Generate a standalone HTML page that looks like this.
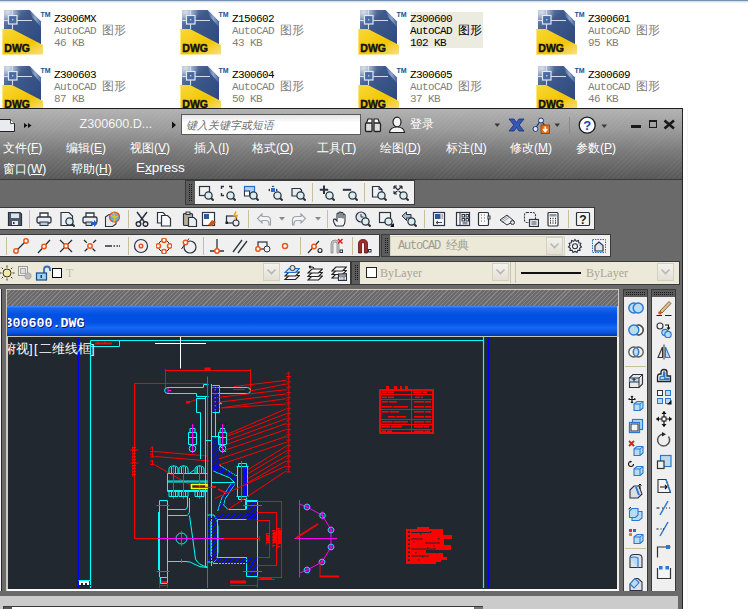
<!DOCTYPE html>
<html><head><meta charset="utf-8">
<style>
*{margin:0;padding:0;box-sizing:border-box}
html,body{width:748px;height:609px;overflow:hidden;background:#fff;font-family:"Liberation Sans",sans-serif}
.a{position:absolute}
.it{position:absolute;width:178px;height:56px}
.it svg{position:absolute;left:0;top:0}
.tx{position:absolute;left:52px;top:3.5px;font-family:"Liberation Mono",monospace;font-size:11px;line-height:12px;letter-spacing:-0.6px;color:#808080;white-space:pre}
.tx b{font-weight:normal;color:#000}
#win{position:absolute;left:0;top:108px;width:683px;height:501px;background:#6a6a6a;overflow:hidden}
#title{position:absolute;left:0;top:0;width:683px;height:72px;border-top:1px solid #1e1e1e;
 background:linear-gradient(#b2b2b2,#9a9a9a 30%,#7a7a7a 60%,#565656);}
#title:after{content:"";position:absolute;left:0;top:0;right:0;bottom:0;
 background:repeating-linear-gradient(135deg,rgba(255,255,255,0) 0 2.6px,rgba(255,255,255,.04) 2.6px 3.6px)}
.mn{position:absolute;color:#fff;font-size:13px;line-height:14px;white-space:pre;z-index:2}
.tb{position:absolute;background:#f0f0f0;border:1px solid #3c3c3c}
.sep{position:absolute;width:1px;background:#c9bd98}
.grip{position:absolute;background:#555;}
</style></head><body>
<svg width="0" height="0" style="position:absolute">
<defs>
<linearGradient id="gb" x1="0" y1="0" x2="1" y2="1"><stop offset="0" stop-color="#7890b8"/><stop offset=".35" stop-color="#3e5a8c"/><stop offset="1" stop-color="#2a467c"/></linearGradient>
<linearGradient id="gy" x1="0" y1="0" x2="1" y2="1"><stop offset="0" stop-color="#f7d93a"/><stop offset=".6" stop-color="#f2c500"/><stop offset="1" stop-color="#f7e08a"/></linearGradient>
<radialGradient id="gh" cx="0.15" cy="0.1" r="0.5"><stop offset="0" stop-color="#fff" stop-opacity=".75"/><stop offset="1" stop-color="#fff" stop-opacity="0"/></radialGradient>
<linearGradient id="gf" x1="0" y1="0" x2="1" y2="0"><stop offset="0" stop-color="#3a5890"/><stop offset=".5" stop-color="#a8bcdc"/><stop offset="1" stop-color="#4a6aa0"/></linearGradient>
<symbol id="dwg" viewBox="0 0 52 48">
<path d="M2 1H27.5L39 12.5V40H2Z" fill="url(#gb)"/>
<path d="M27.5 1L39 12.5V18L30 8Z" fill="url(#gf)" opacity=".8"/>
<rect x="2" y="1" width="26" height="22" fill="url(#gh)"/>
<path d="M2 11.5H30M10.5 1V20" stroke="#d0dcee" stroke-width="1.1" fill="none"/>
<rect x="6.5" y="6.5" width="8.5" height="8.5" fill="#4a6aa2" stroke="#e0e8f4" stroke-width="1.2"/>
<rect x="10" y="10" width="1.4" height="1.4" fill="#c0cce0"/>
<path d="M0 20H10L41 36V45.5H0Z" fill="url(#gy)"/>
<path d="M0.5 20.5V45" stroke="#fff2a0" stroke-width="1" opacity=".7"/>
<text x="2.3" y="43" font-family="Liberation Sans" font-weight="bold" font-size="10.5" fill="#111" stroke="#111" stroke-width=".45">DWG</text>
<text x="38.5" y="7.5" font-family="Liberation Sans" font-weight="bold" font-size="7" fill="#1e4e90">TM</text>
</symbol>
</defs></svg>

<!-- explorer -->
<div class="a" style="left:0;top:0;width:748px;height:1px;background:#7393b5"></div>
<div class="a" style="left:0;top:1px;width:748px;height:2px;background:linear-gradient(#c6d4e2,#fff)"></div>

<div class="it" style="left:2px;top:9px"><svg width="52" height="48"><use href="#dwg"/></svg><div class="tx"><b>Z3006MX</b>
AutoCAD <span style="font-size:12px;letter-spacing:0">图形</span>
46 KB</div></div>
<div class="it" style="left:180px;top:9px"><svg width="52" height="48"><use href="#dwg"/></svg><div class="tx"><b>Z150602</b>
AutoCAD <span style="font-size:12px;letter-spacing:0">图形</span>
43 KB</div></div>
<div class="it" style="left:358px;top:9px"><svg width="52" height="48"><use href="#dwg"/></svg><div class="a" style="left:52.7px;top:3px;width:72px;height:35.7px;background:#ecebdf"></div><div class="tx" style="color:#000"><b>Z300600</b>
AutoCAD <span style="font-size:12px;letter-spacing:0">图形</span>
102 KB</div></div>
<div class="it" style="left:536px;top:9px"><svg width="52" height="48"><use href="#dwg"/></svg><div class="tx"><b>Z300601</b>
AutoCAD <span style="font-size:12px;letter-spacing:0">图形</span>
95 KB</div></div>

<div class="it" style="left:2px;top:65px"><svg width="52" height="48"><use href="#dwg"/></svg><div class="tx"><b>Z300603</b>
AutoCAD <span style="font-size:12px;letter-spacing:0">图形</span>
87 KB</div></div>
<div class="it" style="left:180px;top:65px"><svg width="52" height="48"><use href="#dwg"/></svg><div class="tx"><b>Z300604</b>
AutoCAD <span style="font-size:12px;letter-spacing:0">图形</span>
50 KB</div></div>
<div class="it" style="left:358px;top:65px"><svg width="52" height="48"><use href="#dwg"/></svg><div class="tx"><b>Z300605</b>
AutoCAD <span style="font-size:12px;letter-spacing:0">图形</span>
37 KB</div></div>
<div class="it" style="left:536px;top:65px"><svg width="52" height="48"><use href="#dwg"/></svg><div class="tx"><b>Z300609</b>
AutoCAD <span style="font-size:12px;letter-spacing:0">图形</span>
46 KB</div></div>

<!-- AutoCAD window -->
<div class="a" style="left:0;top:108px;width:683px;height:501px;background:#6a6a6a"></div>
<div id="title" style="top:108px"></div>
<div class="a" style="left:0;top:179px;width:683px;height:1px;background:#3a3a3a"></div>
<!-- title bar items -->
<svg class="a" style="left:0;top:118px" width="40" height="16">
 <path d="M-4 1.5H10.5L14.5 5.5V13.5H-4Z" fill="#e8ebf0" stroke="#222" stroke-width="1"/>
 <path d="M10.5 1.5V5.5H14.5" fill="#fff" stroke="#222" stroke-width=".8"/>
 <path d="M24 5L27.5 7.5L24 10ZM28 5L31.5 7.5L28 10Z" fill="#111"/>
</svg>
<div class="mn" style="left:79.5px;top:116.5px;font-size:12.6px;line-height:14px;color:#f4f4f4">Z300600.D...</div>
<svg class="a" style="left:171px;top:121px" width="6" height="8"><path d="M1 0.5L5 4L1 7.5Z" fill="#111"/></svg>
<div class="a" style="left:181px;top:114px;width:180px;height:21px;border:1px solid #5a5a5a;background:linear-gradient(#e6e6e6,#fff 40%);"></div>
<div class="mn" style="left:186px;top:118px;color:#6e6e6e;font-style:italic;font-size:10.8px">键入关键字或短语</div>
<svg class="a" style="left:364px;top:117px" width="20" height="16">
 <path d="M2.5 6L4 2H8V6M10 6V2H14L15.5 6" fill="#fff" stroke="#222" stroke-width="1.2"/>
 <rect x="1.5" y="6" width="6.5" height="8.5" rx="1" fill="#ddd" stroke="#222" stroke-width="1.3"/>
 <rect x="10" y="6" width="6.5" height="8.5" rx="1" fill="#ddd" stroke="#222" stroke-width="1.3"/>
</svg>
<svg class="a" style="left:388px;top:116px" width="18" height="18">
 <ellipse cx="9" cy="6" rx="4" ry="4.8" fill="#f4f4f4" stroke="#222" stroke-width="1.2"/>
 <path d="M1.5 16.5C2 12 5 11 9 11S16 12 16.5 16.5Z" fill="#f4f4f4" stroke="#222" stroke-width="1.2"/>
</svg>
<div class="mn" style="left:410px;top:117px;font-size:12px">登录</div>
<svg class="a" style="left:494px;top:122px" width="8" height="6"><path d="M0.5 1.5H6L3.2 5Z" fill="#3a3a3a"/></svg>
<svg class="a" style="left:508px;top:118px" width="18" height="14">
 <path d="M1 1H6L8.5 4.5L11 1H16L11.2 7L16 13H11L8.5 9.5L6 13H1L5.8 7Z" fill="#3557b8" stroke="#1a2f78" stroke-width=".8"/>
</svg>
<svg class="a" style="left:532px;top:117px" width="20" height="18">
 <path d="M3 12L9 3L13 9" fill="none" stroke="#1e3a7a" stroke-width="1.3"/>
 <circle cx="9" cy="3.5" r="2.5" fill="#dfe8f8" stroke="#1e3a7a"/><circle cx="3.5" cy="12" r="2.5" fill="#dfe8f8" stroke="#1e3a7a"/>
 <rect x="9" y="8" width="8.5" height="8.5" fill="#e8701a" stroke="#8a3a00" stroke-width=".8"/>
 <path d="M13.2 9.5V14M11 12L13.2 14.5L15.4 12" stroke="#fff" stroke-width="1.5" fill="none"/>
</svg>
<svg class="a" style="left:554px;top:122px" width="8" height="6"><path d="M0.5 1.5H6L3.2 5Z" fill="#3a3a3a"/></svg>
<div class="a" style="left:569px;top:117px;width:1px;height:17px;background:#8a8a8a"></div>
<svg class="a" style="left:578px;top:116px" width="19" height="19">
 <circle cx="9.2" cy="9.2" r="8" fill="#fafafa" stroke="#1a1a1a" stroke-width="1.3"/>
 <text x="9.2" y="14.2" text-anchor="middle" font-family="Liberation Sans" font-weight="bold" font-size="13" fill="#1d3fb8">?</text>
</svg>
<svg class="a" style="left:601px;top:123px" width="8" height="6"><path d="M0.5 1.5H6L3.2 5Z" fill="#3a3a3a"/></svg>
<div class="a" style="left:631px;top:125px;width:10px;height:2.5px;background:#1a1a1a"></div>
<div class="a" style="left:649px;top:120px;width:8px;height:8px;border:1.5px solid #1a1a1a;border-top-width:2px"></div>
<svg class="a" style="left:663px;top:119px" width="13" height="11"><path d="M1.5 1.5L11 9.5M11 1.5L1.5 9.5" stroke="#1a1a1a" stroke-width="2.6"/></svg>

<!-- menus -->
<div class="mn" style="left:3px;top:141px;font-size:12px">文件(<u>F</u>)</div>
<div class="mn" style="left:66px;top:141px;font-size:12px">编辑(<u>E</u>)</div>
<div class="mn" style="left:130px;top:141px;font-size:12px">视图(<u>V</u>)</div>
<div class="mn" style="left:194px;top:141px;font-size:12px">插入(<u>I</u>)</div>
<div class="mn" style="left:252px;top:141px;font-size:12px">格式(<u>O</u>)</div>
<div class="mn" style="left:317px;top:141px;font-size:12px">工具(<u>T</u>)</div>
<div class="mn" style="left:380px;top:141px;font-size:12px">绘图(<u>D</u>)</div>
<div class="mn" style="left:446px;top:141px;font-size:12px">标注(<u>N</u>)</div>
<div class="mn" style="left:510px;top:141px;font-size:12px">修改(<u>M</u>)</div>
<div class="mn" style="left:576px;top:141px;font-size:12px">参数(<u>P</u>)</div>
<div class="mn" style="left:3px;top:161.5px;font-size:12px">窗口(<u>W</u>)</div>
<div class="mn" style="left:71px;top:161.5px;font-size:12px">帮助(<u>H</u>)</div>
<div class="mn" style="left:136px;top:161px;font-size:13.5px">E<u>x</u>press</div>

<div class="a" style="left:185px;top:180px;width:230px;height:25px;background:#f0f0f0;border:1px solid #3a3a3a"></div>
<svg class="a" style="left:186px;top:181px" width="9" height="23"><rect width="9" height="23" fill="#5c5c5c"/><rect x="3" y="3" width="1" height="1" fill="#1a1a1a"/><rect x="3" y="5" width="1" height="1" fill="#1a1a1a"/><rect x="3" y="7" width="1" height="1" fill="#1a1a1a"/><rect x="3" y="9" width="1" height="1" fill="#1a1a1a"/><rect x="3" y="11" width="1" height="1" fill="#1a1a1a"/><rect x="3" y="13" width="1" height="1" fill="#1a1a1a"/><rect x="3" y="15" width="1" height="1" fill="#1a1a1a"/><rect x="3" y="17" width="1" height="1" fill="#1a1a1a"/><rect x="3" y="19" width="1" height="1" fill="#1a1a1a"/><rect x="5" y="3" width="1" height="1" fill="#1a1a1a"/><rect x="5" y="5" width="1" height="1" fill="#1a1a1a"/><rect x="5" y="7" width="1" height="1" fill="#1a1a1a"/><rect x="5" y="9" width="1" height="1" fill="#1a1a1a"/><rect x="5" y="11" width="1" height="1" fill="#1a1a1a"/><rect x="5" y="13" width="1" height="1" fill="#1a1a1a"/><rect x="5" y="15" width="1" height="1" fill="#1a1a1a"/><rect x="5" y="17" width="1" height="1" fill="#1a1a1a"/><rect x="5" y="19" width="1" height="1" fill="#1a1a1a"/></svg>
<svg class="a" style="left:197.7px;top:184.5px" width="16" height="16"><rect x="1.5" y="1.5" width="10" height="9" fill="none" stroke="#2b3340" stroke-width="1.2"/><circle cx="10.5" cy="10.5" r="3.6" fill="#d9eeee" stroke="#2b3340" stroke-width="1.3"/><path d="M13.2 13.2L15.6 15.6" stroke="#2b3340" stroke-width="2"/></svg>
<svg class="a" style="left:220.0px;top:184.5px" width="16" height="16"><path d="M1.5 4V1.5H4M9 1.5H11.5V4M1.5 8V10.5H4" fill="none" stroke="#2b3340" stroke-width="1.4"/><circle cx="10.5" cy="10.5" r="3.6" fill="#d9eeee" stroke="#2b3340" stroke-width="1.3"/><path d="M13.2 13.2L15.6 15.6" stroke="#2b3340" stroke-width="2"/></svg>
<svg class="a" style="left:243.4px;top:184.5px" width="16" height="16"><rect x="1.5" y="1.5" width="10" height="9" fill="#a9d4f2" stroke="#2a6ec8" stroke-width="1.2"/><rect x="1.5" y="6" width="5" height="5" fill="#fff" stroke="#2b3340"/><circle cx="10.5" cy="10.5" r="3.6" fill="#d9eeee" stroke="#2b3340" stroke-width="1.3"/><path d="M13.2 13.2L15.6 15.6" stroke="#2b3340" stroke-width="2"/></svg>
<svg class="a" style="left:266.7px;top:184.5px" width="16" height="16"><rect x="4" y="3" width="4" height="4" fill="#2a6ec8"/><path d="M1 5L3 3.5V6.5ZM11 5L9 3.5V6.5ZM6 0.5L4.5 2H7.5Z" fill="#2b3340"/><circle cx="10.5" cy="10.5" r="3.6" fill="#d9eeee" stroke="#2b3340" stroke-width="1.3"/><path d="M13.2 13.2L15.6 15.6" stroke="#2b3340" stroke-width="2"/></svg>
<svg class="a" style="left:290.0px;top:184.5px" width="16" height="16"><path d="M2 3.5H10L11.5 5V11H2Z" fill="#e8ecf2" stroke="#2b3340" stroke-width="1.2"/><circle cx="10.5" cy="10.5" r="3.6" fill="#d9eeee" stroke="#2b3340" stroke-width="1.3"/><path d="M13.2 13.2L15.6 15.6" stroke="#2b3340" stroke-width="2"/></svg>
<svg class="a" style="left:318.5px;top:184.5px" width="16" height="16"><path d="M5 0.5V9M0.8 4.8H9.2" stroke="#2b3340" stroke-width="2"/><circle cx="10.5" cy="10.5" r="3.6" fill="#d9eeee" stroke="#2b3340" stroke-width="1.3"/><path d="M13.2 13.2L15.6 15.6" stroke="#2b3340" stroke-width="2"/></svg>
<svg class="a" style="left:341.8px;top:184.5px" width="16" height="16"><path d="M0.8 4.8H9.2" stroke="#2b3340" stroke-width="2"/><circle cx="10.5" cy="10.5" r="3.6" fill="#d9eeee" stroke="#2b3340" stroke-width="1.3"/><path d="M13.2 13.2L15.6 15.6" stroke="#2b3340" stroke-width="2"/></svg>
<svg class="a" style="left:370.7px;top:184.5px" width="16" height="16"><path d="M1.5 1.5H8L11 4.5V12H1.5Z" fill="#eef1f5" stroke="#2b3340" stroke-width="1.2"/><path d="M8 1.5V4.5H11" fill="none" stroke="#2b3340"/><circle cx="10.5" cy="10.5" r="3.6" fill="#d9eeee" stroke="#2b3340" stroke-width="1.3"/><path d="M13.2 13.2L15.6 15.6" stroke="#2b3340" stroke-width="2"/></svg>
<svg class="a" style="left:393.0px;top:184.5px" width="16" height="16"><path d="M1 1L9 9M1 9L9 1M1 1H4M1 1V4M9 1H6M9 1V4M1 9V6M1 9H4" fill="none" stroke="#2b3340" stroke-width="1.2"/><circle cx="10.5" cy="10.5" r="3.6" fill="#d9eeee" stroke="#2b3340" stroke-width="1.3"/><path d="M13.2 13.2L15.6 15.6" stroke="#2b3340" stroke-width="2"/></svg>
<div class="a" style="left:312px;top:183px;width:1px;height:19px;background:#cbbf9a"></div>
<div class="a" style="left:364px;top:183px;width:1px;height:19px;background:#cbbf9a"></div>
<div class="a" style="left:-1px;top:207px;width:596px;height:23px;background:#f0f0f0;border:1px solid #3a3a3a"></div>
<svg class="a" style="left:7.0px;top:210.5px" width="16" height="16"><path d="M1.5 1.5H13L14.5 3V14.5H1.5Z" fill="#4e5a6a" stroke="#2a3240" stroke-width="1.2"/><rect x="4" y="2.5" width="8" height="4.5" fill="#dde3ea"/><rect x="5" y="10" width="6" height="4" fill="#e8ecf0"/><rect x="6" y="11" width="1.5" height="2" fill="#333"/></svg>
<svg class="a" style="left:36.0px;top:210.5px" width="16" height="16"><path d="M4 6V2H12V6" fill="#fff" stroke="#2b3340" stroke-width="1.3"/><rect x="1" y="6" width="14" height="6" rx="1.5" fill="#e9ecf0" stroke="#2b3340" stroke-width="1.3"/><rect x="4" y="11" width="8" height="3.5" fill="#bcd" stroke="#2b3340"/></svg>
<svg class="a" style="left:59.0px;top:210.5px" width="16" height="16"><path d="M2 1.5H10L13.5 5V14.5H2Z" fill="#eef1f5" stroke="#2b3340" stroke-width="1.2"/><circle cx="10.5" cy="10.5" r="3.6" fill="#d9eeee" stroke="#2b3340" stroke-width="1.3"/><path d="M13.2 13.2L15.6 15.6" stroke="#2b3340" stroke-width="2"/></svg>
<svg class="a" style="left:81.5px;top:210.5px" width="16" height="16"><path d="M4 6V2H12V6" fill="#fff" stroke="#2b3340" stroke-width="1.3"/><rect x="1" y="6" width="14" height="6" rx="1.5" fill="#e9ecf0" stroke="#2b3340" stroke-width="1.3"/><rect x="4" y="11" width="6" height="3.5" fill="#bcd" stroke="#2b3340"/><path d="M9 11H12V9L15.5 12.5L12 16V14H9Z" fill="#1a64c8"/></svg>
<svg class="a" style="left:104.0px;top:210.5px" width="16" height="16"><path d="M1.5 6L5 3.5H12V13L8.5 15.5H1.5Z" fill="#e6e9ee" stroke="#2b3340" stroke-width="1.1"/><circle cx="10.5" cy="6" r="5" fill="#59b5e6" stroke="#e84a20" stroke-width="1.2"/><path d="M7 4Q10 8 14 5M9 1.5Q12 6 10 11" stroke="#f0c020" stroke-width="1.2" fill="none"/></svg>
<svg class="a" style="left:133.7px;top:210.5px" width="16" height="16"><path d="M3 1L10.5 11M13 1L5.5 11" stroke="#2b3340" stroke-width="1.5"/><circle cx="4.5" cy="13" r="2.3" fill="none" stroke="#2b3340" stroke-width="1.5"/><circle cx="11.5" cy="13" r="2.3" fill="none" stroke="#2b3340" stroke-width="1.5"/></svg>
<svg class="a" style="left:156.4px;top:210.5px" width="16" height="16"><path d="M1.5 1.5H7L9 3.5V12H1.5Z" fill="#fafafa" stroke="#2b3340" stroke-width="1.2"/><path d="M5.5 4.5H11.5L14.5 7.5V15H5.5Z" fill="#fafafa" stroke="#2b3340" stroke-width="1.2"/></svg>
<svg class="a" style="left:182.0px;top:210.5px" width="16" height="16"><rect x="1.5" y="2.5" width="9" height="12" rx="1" fill="#b8ad98" stroke="#2b3340" stroke-width="1.2"/><rect x="4" y="1" width="4" height="2.5" fill="#ddd" stroke="#2b3340"/><path d="M6.5 6.5H12L14.5 9V15.5H6.5Z" fill="#e9eef4" stroke="#2b3340" stroke-width="1.2"/></svg>
<svg class="a" style="left:201.4px;top:210.5px" width="16" height="16"><rect x="1.5" y="1.5" width="12" height="13" fill="#fff" stroke="#2b3340" stroke-width="1.2"/><rect x="3" y="3" width="5" height="5" fill="#2a5a9a"/><path d="M7 14L11 9L15 11L11 15Z" fill="#c85a10"/></svg>
<svg class="a" style="left:225.4px;top:210.5px" width="16" height="16"><rect x="1.5" y="5" width="10" height="7" fill="#e9edf1" stroke="#2b3340" stroke-width="1.2"/><circle cx="11" cy="12" r="3" fill="#eee" stroke="#2b3340" stroke-width="1.1"/><rect x="0.5" y="10.5" width="2.5" height="2.5" fill="#222"/><path d="M11 0.5L9 4.5H12L10 8.5" stroke="#f0a010" stroke-width="1.5" fill="none"/></svg>
<svg class="a" style="left:256.0px;top:210.5px" width="16" height="16"><path d="M6 3L1.5 7.5L6 12V9.5H10Q13 9.5 13 12.5V14H14.5V9Q14.5 5.5 10.5 5.5H6Z" fill="#f4f4f4" stroke="#9aa2ac" stroke-width="1.1"/></svg>
<svg class="a" style="left:291.0px;top:210.5px" width="16" height="16"><path d="M10 3L14.5 7.5L10 12V9.5H6Q3 9.5 3 12.5V14H1.5V9Q1.5 5.5 5.5 5.5H10Z" fill="#f4f4f4" stroke="#9aa2ac" stroke-width="1.1"/></svg>
<svg class="a" style="left:332.4px;top:210.5px" width="16" height="16"><path d="M4 15Q1 11 1.5 8.5L3 8L5 10V3Q5 2 6 2T7 3V7V1.8Q7 1 8 1T9 1.8V7V2.3Q9 1.5 10 1.5T11 2.3V7.5V4Q11 3 12 3T13 4V10Q13 13 11 15Z" fill="#f4f4f4" stroke="#2b3340" stroke-width="1.1"/></svg>
<svg class="a" style="left:355.0px;top:210.5px" width="16" height="16"><circle cx="6" cy="6" r="5" fill="#dce4ec" stroke="#2b3340" stroke-width="1.2"/><path d="M6 3V6H8.5" stroke="#2b3340" fill="none"/><circle cx="10.5" cy="10.5" r="3.6" fill="#d9eeee" stroke="#2b3340" stroke-width="1.3"/><path d="M13.2 13.2L15.6 15.6" stroke="#2b3340" stroke-width="2"/></svg>
<svg class="a" style="left:377.8px;top:210.5px" width="16" height="16"><rect x="1.5" y="1.5" width="11" height="10" fill="none" stroke="#2b3340" stroke-width="1.2"/><circle cx="10.5" cy="10.5" r="3.6" fill="#d9eeee" stroke="#2b3340" stroke-width="1.3"/><path d="M13.2 13.2L15.6 15.6" stroke="#2b3340" stroke-width="2"/><path d="M16 12V16H12Z" fill="#111"/></svg>
<svg class="a" style="left:401.4px;top:210.5px" width="16" height="16"><path d="M1 5L5.5 1V3.5H10V7H5.5V9.5Z" fill="#a9b8c8" stroke="#2b3340" stroke-width="1"/><circle cx="10.5" cy="10.5" r="3.6" fill="#d9eeee" stroke="#2b3340" stroke-width="1.3"/><path d="M13.2 13.2L15.6 15.6" stroke="#2b3340" stroke-width="2"/></svg>
<svg class="a" style="left:430.8px;top:210.5px" width="16" height="16"><rect x="2.5" y="1.5" width="11" height="13" fill="#fafafa" stroke="#2b3340" stroke-width="1.2"/><rect x="4" y="3" width="5.5" height="5" fill="#2a5a9a"/><rect x="10.5" y="3" width="1.5" height="5" fill="#aaa"/><path d="M5 11.5H11M5 11.5L7 10M5 11.5L7 13" stroke="#2b3340" stroke-width=".9" fill="none"/></svg>
<svg class="a" style="left:454.8px;top:210.5px" width="16" height="16"><rect x="1.5" y="1.5" width="13" height="13" fill="#fafafa" stroke="#2b3340" stroke-width="1.2"/><path d="M5 1.5V14.5" stroke="#2b3340"/><rect x="7" y="3.5" width="2.5" height="2.5" fill="none" stroke="#2b3340"/><rect x="11" y="3.5" width="2.5" height="2.5" fill="none" stroke="#2b3340"/><rect x="7" y="7.5" width="2.5" height="2.5" fill="none" stroke="#2b3340"/><rect x="11" y="7.5" width="2.5" height="2.5" fill="none" stroke="#2b3340"/><rect x="7.5" y="11" width="5" height="2.5" fill="#889"/></svg>
<svg class="a" style="left:476.0px;top:210.5px" width="16" height="16"><rect x="2.5" y="1.5" width="10" height="13" rx="1" fill="#fafafa" stroke="#2b3340" stroke-width="1.2"/><path d="M5 4H6M8 4H9M5 7H6M8 7H9M5 10H6M8 10H9" stroke="#999" stroke-width="1.5"/><rect x="12" y="5" width="2" height="3" fill="#fff" stroke="#2b3340"/></svg>
<svg class="a" style="left:499.0px;top:210.5px" width="16" height="16"><path d="M1 9L8 4L15 10L8 14Z" fill="#eceef0" stroke="#2b3340" stroke-width="1"/><path d="M2 10L9 5M3 11.5L10 6.5" stroke="#888" stroke-width=".8"/><circle cx="13.5" cy="11.5" r="2" fill="#ddd" stroke="#2b3340"/></svg>
<svg class="a" style="left:523.0px;top:210.5px" width="16" height="16"><rect x="1.5" y="1.5" width="11" height="10" rx="2.5" fill="none" stroke="#2b3340" stroke-width="1.1" stroke-dasharray="2 1"/><rect x="6.5" y="8.5" width="9" height="7" fill="#eef2f6" stroke="#2b3340" stroke-width="1.2"/><path d="M8.5 11H13.5M8.5 13H13.5" stroke="#2b3340" stroke-width=".9"/></svg>
<svg class="a" style="left:545.0px;top:210.5px" width="16" height="16"><rect x="3" y="1.5" width="10" height="13.5" rx="1" fill="#fafafa" stroke="#2b3340" stroke-width="1.2"/><rect x="4.5" y="3" width="7" height="2.5" fill="#8a96a6"/><path d="M5 7.5H6M7.5 7.5H8.5M10 7.5H11M5 9.8H6M7.5 9.8H8.5M10 9.8H11M5 12H6M7.5 12H8.5M10 12H11" stroke="#333" stroke-width="1.3"/></svg>
<svg class="a" style="left:575.0px;top:210.5px" width="16" height="16"><rect x="1.5" y="1.5" width="13" height="13" rx="1" fill="#f4f4f4" stroke="#2b3340" stroke-width="1.2"/><text x="8" y="13" text-anchor="middle" font-family="Liberation Sans" font-weight="bold" font-size="12" fill="#1a1a1a">?</text></svg>
<svg class="a" style="left:277.5px;top:214.5px" width="8" height="8"><path d="M1 2H7L4 5.5Z" fill="#8a8a8a"/></svg>
<svg class="a" style="left:313.6px;top:214.5px" width="8" height="8"><path d="M1 2H7L4 5.5Z" fill="#8a8a8a"/></svg>
<div class="a" style="left:29px;top:210px;width:1px;height:18px;background:#cbbf9a"></div>
<div class="a" style="left:128px;top:210px;width:1px;height:18px;background:#cbbf9a"></div>
<div class="a" style="left:248px;top:210px;width:1px;height:18px;background:#cbbf9a"></div>
<div class="a" style="left:327px;top:210px;width:1px;height:18px;background:#cbbf9a"></div>
<div class="a" style="left:424px;top:210px;width:1px;height:18px;background:#cbbf9a"></div>
<div class="a" style="left:568px;top:210px;width:1px;height:18px;background:#cbbf9a"></div>
<div class="a" style="left:-1px;top:234px;width:381px;height:23px;background:#f0f0f0;border:1px solid #3a3a3a"></div>
<svg class="a" style="left:12.9px;top:237.8px" width="16" height="16"><path d="M3 13L13 3" stroke="#2b3340" stroke-width="1.3"/><circle cx="3" cy="13" r="2.2" fill="#fff" stroke="#e8581a" stroke-width="1.5"/><circle cx="13" cy="3" r="2.2" fill="#fff" stroke="#e8581a" stroke-width="1.5"/></svg>
<svg class="a" style="left:36.0px;top:237.8px" width="16" height="16"><path d="M2 15L14 2" stroke="#2b3340" stroke-width="1.3"/><circle cx="8" cy="8.5" r="2.2" fill="#fff" stroke="#e8581a" stroke-width="1.5"/></svg>
<svg class="a" style="left:58.3px;top:237.8px" width="16" height="16"><path d="M2 2L14 14M14 2L2 14" stroke="#2b3340" stroke-width="1.3"/><circle cx="8" cy="8" r="2.2" fill="#fff" stroke="#e8581a" stroke-width="1.5"/></svg>
<svg class="a" style="left:81.6px;top:237.8px" width="16" height="16"><path d="M2 2L14 14M14 2L2 14" stroke="#2b3340" stroke-width="1.3" stroke-dasharray="4 2"/><circle cx="8" cy="8" r="2.2" fill="#fff" stroke="#e8581a" stroke-width="1.5"/></svg>
<svg class="a" style="left:104.0px;top:237.8px" width="16" height="16"><path d="M1 8H8M9.5 8H11M12.5 8H14M15 8H16" stroke="#2b3340" stroke-width="1.3"/></svg>
<svg class="a" style="left:133.0px;top:237.8px" width="16" height="16"><circle cx="8" cy="8" r="6.5" fill="#f0f0f0" stroke="#2b3340" stroke-width="1.2"/><circle cx="8" cy="8" r="1.8" fill="#fff" stroke="#e8581a" stroke-width="1.5"/></svg>
<svg class="a" style="left:156.4px;top:237.8px" width="16" height="16"><circle cx="8" cy="8" r="5.8" fill="none" stroke="#2b3340" stroke-width="1"/><circle cx="8" cy="2.3" r="2.2" fill="#fff" stroke="#e8581a" stroke-width="1.5"/><circle cx="8" cy="13.7" r="2.2" fill="#fff" stroke="#e8581a" stroke-width="1.5"/><circle cx="2.3" cy="8" r="2.2" fill="#fff" stroke="#e8581a" stroke-width="1.5"/><circle cx="13.7" cy="8" r="2.2" fill="#fff" stroke="#e8581a" stroke-width="1.5"/></svg>
<svg class="a" style="left:180.5px;top:237.8px" width="16" height="16"><circle cx="9" cy="9" r="6" fill="#f0f0f0" stroke="#2b3340" stroke-width="1.2"/><path d="M0.5 11L8 0.5" stroke="#2b3340"/><circle cx="4.5" cy="4.5" r="2.2" fill="#fff" stroke="#e8581a" stroke-width="1.5"/></svg>
<svg class="a" style="left:208.6px;top:237.8px" width="16" height="16"><path d="M8 1V13M1 13H15" stroke="#2b3340" stroke-width="1.3"/><circle cx="8" cy="13" r="2.2" fill="#fff" stroke="#e8581a" stroke-width="1.5"/></svg>
<svg class="a" style="left:232.0px;top:237.8px" width="16" height="16"><path d="M1 14L10 2M6 15L15 3" stroke="#2b3340" stroke-width="1.3"/></svg>
<svg class="a" style="left:254.8px;top:237.8px" width="16" height="16"><rect x="3" y="4" width="9" height="7" fill="none" stroke="#2b3340" stroke-width="1.2"/><circle cx="12" cy="11" r="3" fill="#f0f0f0" stroke="#2b3340"/><circle cx="3" cy="11" r="2.2" fill="#fff" stroke="#e8581a" stroke-width="1.5"/></svg>
<svg class="a" style="left:277.0px;top:237.8px" width="16" height="16"><circle cx="8" cy="8" r="2.5" fill="#fff" stroke="#e8581a" stroke-width="1.5"/></svg>
<svg class="a" style="left:307.0px;top:237.8px" width="16" height="16"><path d="M1 15L12 3" stroke="#2b3340" stroke-width="1.2"/><circle cx="7" cy="8.5" r="2.2" fill="#fff" stroke="#e8581a" stroke-width="1.5"/><circle cx="13" cy="12.5" r="2" fill="none" stroke="#2b3340" stroke-width="1.2"/></svg>
<svg class="a" style="left:328.4px;top:237.8px" width="16" height="16"><path d="M3 15V6Q3 2 7 2Q11 2 11 6V15H9V6Q9 4 7 4Q5 4 5 6V15Z" fill="#c8c8c8" stroke="#888" stroke-width=".8"/><path d="M10 1L14.5 5.5M14.5 1L10 5.5" stroke="#e02020" stroke-width="1.6"/><rect x="12" y="12" width="2.5" height="2.5" fill="none" stroke="#2b3340"/></svg>
<svg class="a" style="left:356.4px;top:237.8px" width="16" height="16"><path d="M2.5 15V6Q2.5 1.5 7 1.5Q11.5 1.5 11.5 6V15H8.5V6Q8.5 4.5 7 4.5Q5.5 4.5 5.5 6V15Z" fill="#a42a2a" stroke="#5a1010" stroke-width=".8"/><rect x="12.5" y="11.5" width="2.5" height="2.5" fill="none" stroke="#2b3340"/></svg>
<div class="a" style="left:6px;top:237px;width:1px;height:18px;background:#cbbf9a"></div>
<div class="a" style="left:128px;top:237px;width:1px;height:18px;background:#cbbf9a"></div>
<div class="a" style="left:203px;top:237px;width:1px;height:18px;background:#cbbf9a"></div>
<div class="a" style="left:300px;top:237px;width:1px;height:18px;background:#cbbf9a"></div>
<div class="a" style="left:352px;top:237px;width:1px;height:18px;background:#cbbf9a"></div>
<div class="a" style="left:381px;top:234px;width:230px;height:23px;background:#f0f0f0;border:1px solid #3a3a3a"></div>
<svg class="a" style="left:382px;top:235px" width="8" height="21"><rect width="8" height="21" fill="#5c5c5c"/><rect x="3" y="3" width="1" height="1" fill="#1a1a1a"/><rect x="3" y="5" width="1" height="1" fill="#1a1a1a"/><rect x="3" y="7" width="1" height="1" fill="#1a1a1a"/><rect x="3" y="9" width="1" height="1" fill="#1a1a1a"/><rect x="3" y="11" width="1" height="1" fill="#1a1a1a"/><rect x="3" y="13" width="1" height="1" fill="#1a1a1a"/><rect x="3" y="15" width="1" height="1" fill="#1a1a1a"/><rect x="3" y="17" width="1" height="1" fill="#1a1a1a"/><rect x="5" y="3" width="1" height="1" fill="#1a1a1a"/><rect x="5" y="5" width="1" height="1" fill="#1a1a1a"/><rect x="5" y="7" width="1" height="1" fill="#1a1a1a"/><rect x="5" y="9" width="1" height="1" fill="#1a1a1a"/><rect x="5" y="11" width="1" height="1" fill="#1a1a1a"/><rect x="5" y="13" width="1" height="1" fill="#1a1a1a"/><rect x="5" y="15" width="1" height="1" fill="#1a1a1a"/><rect x="5" y="17" width="1" height="1" fill="#1a1a1a"/></svg>
<div class="a" style="left:390px;top:236px;width:175px;height:20px;background:#ece9d8;border:1px solid #d8d4c0"></div>
<div class="mn" style="left:398px;top:239px;color:#a09d90;font-family:'Liberation Mono',monospace;font-size:12px;letter-spacing:-1.2px">AutoCAD 经典</div>
<div class="a" style="left:546px;top:237px;width:17px;height:18px;background:linear-gradient(#f2f2ee,#e2e0d6);border:1px solid #d4d0c0"></div><svg class="a" style="left:549px;top:242px" width="11" height="8"><path d="M1.5 1.5L5.5 5.5L9.5 1.5" stroke="#b8b6ae" stroke-width="1.6" fill="none"/></svg>
<svg class="a" style="left:566.7px;top:237.5px" width="16" height="16"><path d="M8 1.5L9.3 3.3L11.5 2.6L11.7 4.8L13.9 5.3L13 7.4L14.5 9L12.6 10.2L13 12.4L10.8 12.4L10 14.5L8 13.4L6 14.5L5.2 12.4L3 12.4L3.4 10.2L1.5 9L3 7.4L2.1 5.3L4.3 4.8L4.5 2.6L6.7 3.3Z" fill="#f4f4f4" stroke="#2b3340" stroke-width="1.1"/><circle cx="8" cy="8.3" r="2.5" fill="#f4f4f4" stroke="#2b3340" stroke-width="1.1"/></svg>
<svg class="a" style="left:591.0px;top:237.5px" width="16" height="16"><rect x="1.5" y="1.5" width="13" height="13" fill="none" stroke="#2a6ec8" stroke-width="1" stroke-dasharray="1.5 1"/><path d="M4 13V7.5L8 4L12 7.5V13Z" fill="#e2e6ea" stroke="#2b3340" stroke-width="1.2"/></svg>
<div class="a" style="left:-1px;top:261px;width:352px;height:24px;background:#f0f0f0;border:1px solid #3a3a3a"></div>
<div class="a" style="left:0;top:262px;width:280px;height:22px;background:#ece9d8"></div>
<svg class="a" style="left:-0.8px;top:264.5px" width="16" height="16"><circle cx="8" cy="8" r="4" fill="#f8e8a0" stroke="#333" stroke-width="1"/><path d="M8 0.5V2.5M8 13.5V15.5M0.5 8H2.5M13.5 8H15.5M2.7 2.7L4 4M12 12L13.3 13.3M2.7 13.3L4 12M12 4L13.3 2.7" stroke="#333" stroke-width="1"/></svg>
<svg class="a" style="left:16.6px;top:264.5px" width="16" height="16"><rect x="1.5" y="1.5" width="9" height="9" fill="#eee" stroke="#999"/><rect x="3.5" y="3.5" width="5" height="5" fill="#ddd" stroke="#aaa"/><circle cx="11" cy="11" r="3.2" fill="#bbb" stroke="#aaa"/></svg>
<svg class="a" style="left:34.8px;top:264.5px" width="16" height="16"><path d="M9 8V4.5Q9 1.5 12 1.5Q15 1.5 15 4.5V6" fill="none" stroke="#2a6ec8" stroke-width="1.8"/><rect x="1.5" y="8" width="10" height="7" fill="#9ed0f0" stroke="#1a4a8a" stroke-width="1.2"/><rect x="5.5" y="10" width="1.5" height="3" fill="#1a3a6a"/></svg>
<div class="a" style="left:52px;top:268px;width:10px;height:10px;background:#fff;border:1.5px solid #000"></div>
<div class="mn" style="left:66px;top:266px;color:#c0bcb0;font-family:'Liberation Serif',serif;font-size:12px">T</div>
<div class="a" style="left:263px;top:263px;width:17px;height:18px;background:linear-gradient(#f2f2ee,#e2e0d6);border:1px solid #d4d0c0"></div><svg class="a" style="left:266px;top:268px" width="11" height="8"><path d="M1.5 1.5L5.5 5.5L9.5 1.5" stroke="#b8b6ae" stroke-width="1.6" fill="none"/></svg>
<svg class="a" style="left:284.0px;top:264.5px" width="16" height="16"><path d="M1 14.5L5 10.5H15.5L11.5 14.5Z" fill="#f6f6f6" stroke="#222" stroke-width="1.1"/><path d="M1 11L5 7H15.5L11.5 11Z" fill="#f6f6f6" stroke="#222" stroke-width="1.1"/><path d="M1 7.5L5 3.5H15.5L11.5 7.5Z" fill="#bfe0f6" stroke="#1a6ed0" stroke-width="1.1"/><circle cx="8.5" cy="3" r="2.6" fill="#e0e0e0" stroke="#333" stroke-width="1"/></svg>
<svg class="a" style="left:307.0px;top:264.5px" width="16" height="16"><path d="M1 15L5 11H15.5L11.5 15Z" fill="#f6f6f6" stroke="#222" stroke-width="1.1"/><path d="M1 11.5L5 7.5H15.5L11.5 11.5Z" fill="#f6f6f6" stroke="#222" stroke-width="1.1"/><path d="M1 8L5 4H15.5L11.5 8Z" fill="#f6f6f6" stroke="#222" stroke-width="1.1"/><path d="M5 2H2M2 2L3.5 0.8M2 2L3.5 3.2M5 2Q6.5 2 7 3.5" stroke="#111" stroke-width="1.1" fill="none"/></svg>
<svg class="a" style="left:330.5px;top:264.5px" width="16" height="16"><path d="M1 13L5 9H15.5L11.5 13Z" fill="#f6f6f6" stroke="#222" stroke-width="1.1"/><path d="M1 9.5L5 5.5H15.5L11.5 9.5Z" fill="#f6f6f6" stroke="#222" stroke-width="1.1"/><path d="M1 6L5 2H15.5L11.5 6Z" fill="#f6f6f6" stroke="#222" stroke-width="1.1"/><rect x="7.5" y="9" width="8" height="6.5" fill="#f4f4f4" stroke="#2b3340" stroke-width="1.2"/><path d="M7.5 11H15.5" stroke="#2b3340"/><path d="M9.5 12.7H10.5M11.5 12.7H14M9.5 14.2H10.5M11.5 14.2H14" stroke="#555" stroke-width=".8"/></svg>
<div class="a" style="left:351px;top:261px;width:329px;height:24px;background:#f0f0f0;border:1px solid #3a3a3a"></div>
<svg class="a" style="left:352px;top:262px" width="8" height="22"><rect width="8" height="22" fill="#5c5c5c"/><rect x="3" y="3" width="1" height="1" fill="#1a1a1a"/><rect x="3" y="5" width="1" height="1" fill="#1a1a1a"/><rect x="3" y="7" width="1" height="1" fill="#1a1a1a"/><rect x="3" y="9" width="1" height="1" fill="#1a1a1a"/><rect x="3" y="11" width="1" height="1" fill="#1a1a1a"/><rect x="3" y="13" width="1" height="1" fill="#1a1a1a"/><rect x="3" y="15" width="1" height="1" fill="#1a1a1a"/><rect x="3" y="17" width="1" height="1" fill="#1a1a1a"/><rect x="5" y="3" width="1" height="1" fill="#1a1a1a"/><rect x="5" y="5" width="1" height="1" fill="#1a1a1a"/><rect x="5" y="7" width="1" height="1" fill="#1a1a1a"/><rect x="5" y="9" width="1" height="1" fill="#1a1a1a"/><rect x="5" y="11" width="1" height="1" fill="#1a1a1a"/><rect x="5" y="13" width="1" height="1" fill="#1a1a1a"/><rect x="5" y="15" width="1" height="1" fill="#1a1a1a"/><rect x="5" y="17" width="1" height="1" fill="#1a1a1a"/></svg>
<div class="a" style="left:360px;top:262px;width:319px;height:22px;background:#ece9d8"></div>
<div class="a" style="left:366px;top:267px;width:11px;height:11px;background:#fff;border:1.2px solid #222"></div>
<div class="mn" style="left:380px;top:266px;color:#a8a598;font-family:'Liberation Serif',serif;font-size:12px">ByLayer</div>
<div class="a" style="left:492px;top:263px;width:17px;height:18px;background:linear-gradient(#f2f2ee,#e2e0d6);border:1px solid #d4d0c0"></div><svg class="a" style="left:495px;top:268px" width="11" height="8"><path d="M1.5 1.5L5.5 5.5L9.5 1.5" stroke="#b8b6ae" stroke-width="1.6" fill="none"/></svg>
<div class="a" style="left:510px;top:262px;width:6px;height:21px;background:#ece9d8;border-left:1px solid #c8c4b4;border-right:1px solid #c8c4b4"></div>
<div class="a" style="left:521px;top:272px;width:60px;height:1.5px;background:#111"></div>
<div class="mn" style="left:586px;top:266px;color:#a8a598;font-family:'Liberation Serif',serif;font-size:12px">ByLayer</div>
<div class="a" style="left:657px;top:263px;width:17px;height:18px;background:linear-gradient(#f2f2ee,#e2e0d6);border:1px solid #d4d0c0"></div><svg class="a" style="left:660px;top:268px" width="11" height="8"><path d="M1.5 1.5L5.5 5.5L9.5 1.5" stroke="#b8b6ae" stroke-width="1.6" fill="none"/></svg>

<div class="a" style="left:0;top:289px;width:1px;height:302px;background:#f4f4f4"></div>
<div class="a" style="left:1px;top:289px;width:1px;height:302px;background:#2a2a2a"></div>
<div class="a" style="left:6px;top:289px;width:613px;height:302px;background:#cfcbb6"></div>
<div class="a" style="left:7px;top:290px;width:611px;height:16px;background:repeating-linear-gradient(135deg,#6b6b6b 0 2.1px,#878787 2.1px 3px)"></div>
<div class="a" style="left:7px;top:306px;width:610px;height:30px;background:linear-gradient(#4a8cff 0,#1a64f0 7%,#0050e0 30%,#0052e4 55%,#1668f4 72%,#0a52dc 88%,#0038b0 100%)"></div>
<div class="a" style="left:7.5px;top:306px;width:300px;height:30px;overflow:hidden"><div class="a" style="left:-10.9px;top:10.5px;font-family:'Liberation Mono',monospace;font-weight:bold;font-size:13.33px;line-height:14px;color:#fff;text-shadow:1px 1px 0 #0a1a70;white-space:pre">Z300600.DWG</div></div>
<div class="a" style="left:7px;top:336px;width:611px;height:2px;background:#c9c5b2"></div>
<div class="a" style="left:7.5px;top:337px;width:609.5px;height:251.6px;background:#212830;overflow:hidden"></div>
<div class="a" style="left:7px;top:588.6px;width:612px;height:2px;background:#fbfbfb"></div>
<div class="a" style="left:617px;top:337px;width:2px;height:252px;background:#f0efe8"></div>
<svg class="a" style="left:0;top:0" width="748" height="609" viewBox="0 0 748 609"><defs><clipPath id="dc"><rect x="7.5" y="337" width="609.5" height="251.6"/></clipPath></defs><g clip-path="url(#dc)"><path d="M78.5 337 L78.5 588" stroke="#0000ff" stroke-width="1.3" fill="none" /><path d="M90.5 340.5 L483.5 340.5" stroke="#00ffff" stroke-width="1" fill="none" /><path d="M90.5 340.5 L90.5 588" stroke="#00ffff" stroke-width="1.2" fill="none" /><path d="M483.5 337 L483.5 588" stroke="#00ffff" stroke-width="1.2" fill="none" /><path d="M488.5 337 L488.5 588" stroke="#0000ff" stroke-width="1.5" fill="none" /><path d="M90.5 346.5H119.5V340.5" stroke="#00ffff" stroke-width="1" fill="none" /><path d="M95 343.5H112" stroke="#ff0000" stroke-width="2" fill="none" /><rect x="97" y="341.5" width="1.5" height="1.5" fill="#ff0000"/><rect x="104" y="341.5" width="1.5" height="1.5" fill="#ff0000"/><path d="M78.5 580.5 L90.5 580.5" stroke="#00ffff" stroke-width="1" fill="none" /><rect x="79" y="581" width="10" height="4" fill="#ffffff"/><rect x="81" y="583" width="2" height="2" fill="#212830"/><rect x="85" y="583" width="2" height="2" fill="#212830"/><path d="M78.5 585.5 L91 585.5" stroke="#0000ff" stroke-width="1" fill="none" /><path d="M155 343.5 L206 343.5" stroke="#ffffff" stroke-width="1" fill="none" /><path d="M180.5 337 L180.5 368.5" stroke="#ffffff" stroke-width="1" fill="none" /><path d="M165.5 370.5H250.5M165.5 369V391M250.5 369V391" stroke="#ff0000" stroke-width="1" fill="none" /><rect x="204.5" y="367.5" width="6" height="3" fill="#ff0000"/><path d="M134.5 383.5H208M134.5 383V538.5H158" stroke="#ff0000" stroke-width="1" fill="none" /><path d="M132 447.5H136M132.5 447V449.5M132 450.5H136M132.5 450V452.5M132 453.5H136M132.5 453V455.5M132 456.5H136M132.5 456V458.5M132 459.5H136M132.5 459V461.5M132 462.5H136M132.5 462V464.5M132 465.5H136M132.5 465V467.5M132 468.5H136M132.5 468V470.5M132 471.5H136M132.5 471V473.5M132 474.5H136M132.5 474V476.5" stroke="#ff0000" stroke-width="1" fill="none" /><path d="M130.5 450H138.5M130.5 463H138.5" stroke="#ff0000" stroke-width="1" fill="none" /><path d="M150 451.5H154.5M152.5 447V451.5M151 448L152.5 447M150 449H151" stroke="#ff0000" stroke-width="1" fill="none" /><path d="M150 457.0H154.5M152.5 452.5V457.0M151 453.5L152.5 452.5M150 454.5H151" stroke="#ff0000" stroke-width="1" fill="none" /><path d="M150 464.5H154.5M152.5 460V464.5M151 461L152.5 460M150 462H151" stroke="#ff0000" stroke-width="1" fill="none" /><path d="M155 451.5L208 456M155 456.5L210 461M155 465L191 485.5" stroke="#ff0000" stroke-width="1" fill="none" /><rect x="186" y="401" width="4" height="2.5" fill="#ff0000"/><path d="M190 402L196.5 399.5" stroke="#ff0000" stroke-width="1" fill="none" /><path d="M208.5 384.5H203.5V387.5H168Q164.5 387.5 164.5 390.5Q164.5 393.5 168 393.5H196.5V396.5H208.5" stroke="#00ffff" stroke-width="1" fill="none" /><path d="M168 390.5H171M168 388V393" stroke="#ff00ff" stroke-width="1" fill="none" /><path d="M212.5 387.5H247.5Q250.5 387.5 250.5 390.5Q250.5 393.5 247.5 393.5H212.5" stroke="#00ffff" stroke-width="1" fill="none" /><path d="M215 389.5H246M215 391.5H246" stroke="#0000ff" stroke-width="1" fill="none" /><path d="M233 389.5H245" stroke="#ff0000" stroke-width="1" fill="none" /><path d="M207.5 376.5 L207.5 588" stroke="#ff00ff" stroke-width="1" fill="none" /><path d="M205.5 397 L205.5 567" stroke="#00ffff" stroke-width="1" fill="none" /><path d="M209.5 384 L209.5 560" stroke="#0000ff" stroke-width="1" fill="none" /><path d="M211.5 384 L211.5 566" stroke="#00ffff" stroke-width="1" fill="none" /><path d="M196.5 398.5V412.5H200.5V459" stroke="#00ffff" stroke-width="1" fill="none" /><path d="M196.5 398.5H205.5" stroke="#00ffff" stroke-width="1" fill="none" /><path d="M215.5 411.5V437.5" stroke="#00ffff" stroke-width="1" fill="none" /><path d="M205.5 440.5H212" stroke="#00ffff" stroke-width="1" fill="none" /><path d="M212.5 385.5H219.5V412.5H212.5" stroke="#00ffff" stroke-width="1" fill="none" /><svg x="212.5" y="386" width="7" height="26" viewBox="212.5 386 7 26" overflow="hidden"><path d="M186.5 412L212.5 386M189.5 412L215.5 386M192.5 412L218.5 386M195.5 412L221.5 386M198.5 412L224.5 386M201.5 412L227.5 386M204.5 412L230.5 386M207.5 412L233.5 386M210.5 412L236.5 386M213.5 412L239.5 386M216.5 412L242.5 386" stroke="#0000ff" stroke-width="1" fill="none"/></svg><rect x="214.5" y="389" width="1.5" height="1.5" fill="#ff00ff"/><rect x="214.5" y="393" width="1.5" height="1.5" fill="#ff00ff"/><rect x="214.5" y="397" width="1.5" height="1.5" fill="#ff00ff"/><rect x="214.5" y="401" width="1.5" height="1.5" fill="#ff00ff"/><rect x="214.5" y="405" width="1.5" height="1.5" fill="#ff00ff"/><rect x="214.5" y="409" width="1.5" height="1.5" fill="#ff00ff"/><path d="M219.5 402L221.5 404" stroke="#00ffff" stroke-width="1.5" fill="none" /><svg x="212" y="436.5" width="8" height="36" viewBox="212 436.5 8 36" overflow="hidden"><path d="M176 472.5L212 436.5M179 472.5L215 436.5M182 472.5L218 436.5M185 472.5L221 436.5M188 472.5L224 436.5M191 472.5L227 436.5M194 472.5L230 436.5M197 472.5L233 436.5M200 472.5L236 436.5M203 472.5L239 436.5M206 472.5L242 436.5M209 472.5L245 436.5M212 472.5L248 436.5M215 472.5L251 436.5M218 472.5L254 436.5" stroke="#0000ff" stroke-width="1" fill="none"/></svg><path d="M212 436.5H220V446L226 452" stroke="#00ffff" stroke-width="1" fill="none" /><path d="M188.5 432.5H196.5V444.5H188.5Z M190.0 428.5H195.0V432.5M190.0 428.5V432.5M188.5 437.5H196.5" stroke="#00ffff" stroke-width="1" fill="none" /><path d="M192.5 424 L192.5 453" stroke="#ff00ff" stroke-width="1" fill="none" /><circle cx="192.5" cy="448.5" r="3.3" stroke="#00ffff" fill="none" stroke-width="1"/><path d="M218.5 432.5H226.5V444.5H218.5Z M220.0 428.5H225.0V432.5M220.0 428.5V432.5M218.5 437.5H226.5" stroke="#00ffff" stroke-width="1" fill="none" /><path d="M222.5 424 L222.5 453" stroke="#ff00ff" stroke-width="1" fill="none" /><circle cx="222.5" cy="448.5" r="3.3" stroke="#00ffff" fill="none" stroke-width="1"/><path d="M219.5 422V430M225.5 422V430" stroke="#0000ff" stroke-width="1" fill="none" /><path d="M167.5 473.5H207.5M167.5 490.5H207.5M167.5 491.5H207.5M167.5 473.5V491.5M167.5 481H207.5M167.5 482H207.5" stroke="#00ffff" stroke-width="1" fill="none" /><path d="M173.5 465 L173.5 499" stroke="#ff00ff" stroke-width="1" fill="none" /><path d="M169.0 473V469Q169.0 466 173.5 466Q178.0 466 178.0 469V473M171.5 467V473M175.5 467V473M169.0 491.5V496.5H178.0V491.5M171.5 492V497M175.5 492V497" stroke="#00ffff" stroke-width="1" fill="none" /><path d="M183.5 465 L183.5 499" stroke="#ff00ff" stroke-width="1" fill="none" /><path d="M179.0 473V469Q179.0 466 183.5 466Q188.0 466 188.0 469V473M181.5 467V473M185.5 467V473M179.0 491.5V496.5H188.0V491.5M181.5 492V497M185.5 492V497" stroke="#00ffff" stroke-width="1" fill="none" /><path d="M199.5 465 L199.5 499" stroke="#ff00ff" stroke-width="1" fill="none" /><path d="M195.0 473V469Q195.0 466 199.5 466Q204.0 466 204.0 469V473M197.5 467V473M201.5 467V473M195.0 491.5V496.5H204.0V491.5M197.5 492V497M201.5 492V497" stroke="#00ffff" stroke-width="1" fill="none" /><path d="M191.5 484.5H207V488.5H191.5Z" stroke="#ffff00" stroke-width="1.6" fill="none" /><path d="M197 466.5V473M190 473L194 470" stroke="#00ffff" stroke-width="1" fill="none" /><path d="M219.2 465L235.5 475.5H237.7" stroke="#00ffff" stroke-width="1" fill="none" /><path d="M213.3 471L229.5 477.7L234.7 482.8" stroke="#00ffff" stroke-width="1" fill="none" /><clipPath id="hp1"><polygon points="219,465 236,475.5 236,482 230,477 213,471 213,466"/></clipPath><path clip-path="url(#hp1)" d="M196 482L213 465M198.5 482L215.5 465M201.0 482L218.0 465M203.5 482L220.5 465M206.0 482L223.0 465M208.5 482L225.5 465M211.0 482L228.0 465M213.5 482L230.5 465M216.0 482L233.0 465M218.5 482L235.5 465M221.0 482L238.0 465M223.5 482L240.5 465M226.0 482L243.0 465M228.5 482L245.5 465M231.0 482L248.0 465M233.5 482L250.5 465" stroke="#0000ff" stroke-width="1" fill="none"/><path d="M211.5 482.5H234.7" stroke="#00ffff" stroke-width="1" fill="none" /><path d="M237.5 466.5V496.5M247.5 466.5V496.5M236.5 466.5H248.5M236.5 496.5H248.5" stroke="#00ffff" stroke-width="1" fill="none" /><path d="M238.5 463.5H246.5V466M238.5 463.5V466M238.5 496.5V499.5H246.5V496.5" stroke="#00ffff" stroke-width="1" fill="none" /><path d="M241.5 461 L241.5 502" stroke="#ff00ff" stroke-width="1" fill="none" /><svg x="244" y="467" width="3" height="29" viewBox="244 467 3 29" overflow="hidden"><path d="M215 496L244 467M217 496L246 467M219 496L248 467M221 496L250 467M223 496L252 467M225 496L254 467M227 496L256 467M229 496L258 467M231 496L260 467M233 496L262 467M235 496L264 467M237 496L266 467M239 496L268 467M241 496L270 467M243 496L272 467M245 496L274 467" stroke="#0000ff" stroke-width="1" fill="none"/></svg><path d="M234.7 484.3L225 499L223.6 505M228 509.5H245.5V500.5H257.5" stroke="#00ffff" stroke-width="1" fill="none" /><path d="M231 484L222 497.6L217.7 511" stroke="#00ffff" stroke-width="1" fill="none" /><clipPath id="hp2"><polygon points="234.7,484.3 225,499 223.6,505 217.7,511 222,497.6 231,484"/></clipPath><path clip-path="url(#hp2)" d="M190.7 511L217.7 484M193.2 511L220.2 484M195.7 511L222.7 484M198.2 511L225.2 484M200.7 511L227.7 484M203.2 511L230.2 484M205.7 511L232.7 484M208.2 511L235.2 484M210.7 511L237.7 484M213.2 511L240.2 484M215.7 511L242.7 484M218.2 511L245.2 484M220.7 511L247.7 484M223.2 511L250.2 484M225.7 511L252.7 484M228.2 511L255.2 484M230.7 511L257.7 484M233.2 511L260.2 484" stroke="#0000ff" stroke-width="1" fill="none"/><path d="M223.6 505L228 509.5" stroke="#00ffff" stroke-width="1" fill="none" /><path d="M196 487L214 487.5" stroke="#ff0000" stroke-width="1" fill="none" /><rect x="212" y="486" width="4" height="2" fill="#ff0000"/><path d="M218 489L226 493" stroke="#ff0000" stroke-width="1.5" fill="none" /><path d="M159.5 500.5H167.5V577.5H159.5Z" stroke="#00ffff" stroke-width="1" fill="none" /><path d="M158.5 512V570" stroke="#00ffff" stroke-width="1" fill="none" /><path d="M160.5 577.5V583.5H167.5V577.5" stroke="#00ffff" stroke-width="1" fill="none" /><path d="M156.5 505.5H169.5M156.5 571.5H169.5" stroke="#ff00ff" stroke-width="1" fill="none" /><path d="M167.5 509.5H185Q187.5 509.5 187.5 506V497" stroke="#00ffff" stroke-width="1" fill="none" /><path d="M167.5 515.5H186Q189.5 515.5 189.5 510V498" stroke="#00ffff" stroke-width="1" fill="none" /><path d="M189.5 515.5Q193 540 195.5 559Q198 565 207.5 567" stroke="#00ffff" stroke-width="1" fill="none" /><path d="M167.5 561.5H186Q191 561.5 194 564Q199 567.5 207.5 567.5" stroke="#00ffff" stroke-width="1" fill="none" /><circle cx="181.5" cy="538.5" r="5.5" stroke="#00ffff" fill="none" stroke-width="1"/><path d="M181.5 531V546M181.5 559V563" stroke="#ff00ff" stroke-width="1" fill="none" /><path d="M207.5 515H214Q218 520 218 527V552Q218 559 214 562H207.5" stroke="#00ffff" stroke-width="1" fill="none" /><svg x="208" y="516" width="9" height="46" viewBox="208 516 9 46" overflow="hidden"><path d="M162 562L208 516M165 562L211 516M168 562L214 516M171 562L217 516M174 562L220 516M177 562L223 516M180 562L226 516M183 562L229 516M186 562L232 516M189 562L235 516M192 562L238 516M195 562L241 516M198 562L244 516M201 562L247 516M204 562L250 516M207 562L253 516M210 562L256 516M213 562L259 516M216 562L262 516" stroke="#0000ff" stroke-width="1" fill="none"/></svg><path d="M211 521V556" stroke="#00ffff" stroke-width="1" fill="none" /><path d="M257.5 500.5V576.5M217.5 519.5H246.5M217.5 557.5H246.5V576.5M217.5 519.5V557.5M213 563.5H246.5" stroke="#00ffff" stroke-width="1" fill="none" /><svg x="218" y="513" width="39" height="6" viewBox="218 513 39 6" overflow="hidden"><path d="M212 519L218 513M215 519L221 513M218 519L224 513M221 519L227 513M224 519L230 513M227 519L233 513M230 519L236 513M233 519L239 513M236 519L242 513M239 519L245 513M242 519L248 513M245 519L251 513M248 519L254 513M251 519L257 513M254 519L260 513" stroke="#0000ff" stroke-width="1" fill="none"/></svg><svg x="218" y="558" width="39" height="6" viewBox="218 558 39 6" overflow="hidden"><path d="M212 564L218 558M215 564L221 558M218 564L224 558M221 564L227 558M224 564L230 558M227 564L233 558M230 564L236 558M233 564L239 558M236 564L242 558M239 564L245 558M242 564L248 558M245 564L251 558M248 564L254 558M251 564L257 558M254 564L260 558" stroke="#0000ff" stroke-width="1" fill="none"/></svg><svg x="247" y="501" width="10" height="18" viewBox="247 501 10 18" overflow="hidden"><path d="M229 519L247 501M232 519L250 501M235 519L253 501M238 519L256 501M241 519L259 501M244 519L262 501M247 519L265 501M250 519L268 501M253 519L271 501M256 519L274 501" stroke="#0000ff" stroke-width="1" fill="none"/></svg><svg x="247" y="564" width="10" height="12" viewBox="247 564 10 12" overflow="hidden"><path d="M235 576L247 564M238 576L250 564M241 576L253 564M244 576L256 564M247 576L259 564M250 576L262 564M253 576L265 564M256 576L268 564" stroke="#0000ff" stroke-width="1" fill="none"/></svg><path d="M246.5 501.5H257.5V509.5M246.5 501.5V509.5M246.5 576.5H257.5" stroke="#00ffff" stroke-width="1" fill="none" /><path d="M243 571.5H262M243 505.5H262" stroke="#ff00ff" stroke-width="1" fill="none" /><path d="M157 538.5H230" stroke="#ff00ff" stroke-width="1" fill="none" /><path d="M224 538.5H259.5" stroke="#ff0000" stroke-width="1" fill="none" /><path d="M259.5 536V541" stroke="#ff0000" stroke-width="1" fill="none" /><path d="M257.5 501.5H282M257.5 512.5H277M257.5 520.5H270M257.5 557.5H270M257.5 565.5H277M257.5 577.5H282M269.5 520V558M276.5 512V566M281.5 501V578" stroke="#ff0000" stroke-width="1" fill="none" /><path d="M266 533.5H269M266.5 533V535.5M266 536.5H269M266.5 536V538.5M266 539.5H269M266.5 539V541.5M266 542.5H269M266.5 542V544.5" stroke="#ff0000" stroke-width="1" fill="none" /><path d="M272.5 530.5H275.5M273.0 530V532.5M272.5 533.5H275.5M273.0 533V535.5M272.5 536.5H275.5M273.0 536V538.5M272.5 539.5H275.5M273.0 539V541.5M272.5 542.5H275.5M273.0 542V544.5M272.5 545.5H275.5M273.0 545V547.5" stroke="#ff0000" stroke-width="1" fill="none" /><path d="M277.5 528.5H280.5M278.0 528V530.5M277.5 531.5H280.5M278.0 531V533.5M277.5 534.5H280.5M278.0 534V536.5M277.5 537.5H280.5M278.0 537V539.5M277.5 540.5H280.5M278.0 540V542.5M277.5 543.5H280.5M278.0 543V545.5M277.5 546.5H280.5M278.0 546V548.5" stroke="#ff0000" stroke-width="1" fill="none" /><rect x="266" y="535" width="3" height="6" fill="#ff0000"/><rect x="273" y="532" width="3" height="10" fill="#ff0000"/><rect x="278" y="530" width="3" height="14" fill="#ff0000"/><path d="M159.5 577V588M167.5 583V588M159.5 585.5H167.5" stroke="#ff0000" stroke-width="1" fill="none" /><rect x="161" y="581" width="6" height="2" fill="#ff0000"/><rect x="230" y="580.5" width="16" height="3" fill="#ff0000"/><path d="M230 585.5H257.5M257.5 577V588M257.5 579.5H275" stroke="#ff0000" stroke-width="1" fill="none" /><rect x="260" y="577" width="12" height="2.5" fill="#ff0000"/><path d="M286.3 376.5H290.8M288.8 372V376.5M287.3 373L288.8 372M286.3 374H287.3" stroke="#ff0000" stroke-width="1" fill="none" /><path d="M286.3 381.8H290.8M288.8 377.3V381.8M287.3 378.3L288.8 377.3M286.3 379.3H287.3" stroke="#ff0000" stroke-width="1" fill="none" /><path d="M286.3 387.1H290.8M288.8 382.6V387.1M287.3 383.6L288.8 382.6M286.3 384.6H287.3" stroke="#ff0000" stroke-width="1" fill="none" /><path d="M286.3 392.4H290.8M288.8 387.9V392.4M287.3 388.9L288.8 387.9M286.3 389.9H287.3" stroke="#ff0000" stroke-width="1" fill="none" /><path d="M286.3 397.7H290.8M288.8 393.2V397.7M287.3 394.2L288.8 393.2M286.3 395.2H287.3" stroke="#ff0000" stroke-width="1" fill="none" /><path d="M286.3 403.0H290.8M288.8 398.5V403.0M287.3 399.5L288.8 398.5M286.3 400.5H287.3" stroke="#ff0000" stroke-width="1" fill="none" /><path d="M286.3 408.3H290.8M288.8 403.8V408.3M287.3 404.8L288.8 403.8M286.3 405.8H287.3" stroke="#ff0000" stroke-width="1" fill="none" /><path d="M286.3 413.6H290.8M288.8 409.1V413.6M287.3 410.1L288.8 409.1M286.3 411.1H287.3" stroke="#ff0000" stroke-width="1" fill="none" /><path d="M286.3 418.9H290.8M288.8 414.4V418.9M287.3 415.4L288.8 414.4M286.3 416.4H287.3" stroke="#ff0000" stroke-width="1" fill="none" /><path d="M286.3 424.2H290.8M288.8 419.7V424.2M287.3 420.7L288.8 419.7M286.3 421.7H287.3" stroke="#ff0000" stroke-width="1" fill="none" /><path d="M286.3 429.5H290.8M288.8 425V429.5M287.3 426L288.8 425M286.3 427H287.3" stroke="#ff0000" stroke-width="1" fill="none" /><path d="M286.3 434.8H290.8M288.8 430.3V434.8M287.3 431.3L288.8 430.3M286.3 432.3H287.3" stroke="#ff0000" stroke-width="1" fill="none" /><path d="M286.3 440.1H290.8M288.8 435.6V440.1M287.3 436.6L288.8 435.6M286.3 437.6H287.3" stroke="#ff0000" stroke-width="1" fill="none" /><path d="M286.3 445.4H290.8M288.8 440.9V445.4M287.3 441.9L288.8 440.9M286.3 442.9H287.3" stroke="#ff0000" stroke-width="1" fill="none" /><path d="M286.3 450.7H290.8M288.8 446.2V450.7M287.3 447.2L288.8 446.2M286.3 448.2H287.3" stroke="#ff0000" stroke-width="1" fill="none" /><path d="M286.3 456.0H290.8M288.8 451.5V456.0M287.3 452.5L288.8 451.5M286.3 453.5H287.3" stroke="#ff0000" stroke-width="1" fill="none" /><path d="M286.3 461.3H290.8M288.8 456.8V461.3M287.3 457.8L288.8 456.8M286.3 458.8H287.3" stroke="#ff0000" stroke-width="1" fill="none" /><path d="M286.3 466.6H290.8M288.8 462.1V466.6M287.3 463.1L288.8 462.1M286.3 464.1H287.3" stroke="#ff0000" stroke-width="1" fill="none" /><path d="M286.3 471.9H290.8M288.8 467.4V471.9M287.3 468.4L288.8 467.4M286.3 469.4H287.3" stroke="#ff0000" stroke-width="1" fill="none" /><path d="M286 380.4L234 386.5" stroke="#ff0000" stroke-width="1" fill="none" /><path d="M286 384L250 391" stroke="#ff0000" stroke-width="1" fill="none" /><path d="M286 389.7L217 397.5" stroke="#ff0000" stroke-width="1" fill="none" /><path d="M286 393.9L218.4 402.3" stroke="#ff0000" stroke-width="1" fill="none" /><path d="M286 398.7L222 407.7" stroke="#ff0000" stroke-width="1" fill="none" /><path d="M286 404L221 408" stroke="#ff0000" stroke-width="1" fill="none" /><path d="M286 408.9L226.8 434.5" stroke="#ff0000" stroke-width="1" fill="none" /><path d="M286 413.8L226.8 436.5" stroke="#ff0000" stroke-width="1" fill="none" /><path d="M286 418.7L226.8 440.4" stroke="#ff0000" stroke-width="1" fill="none" /><path d="M286 423.6L226.8 444.3" stroke="#ff0000" stroke-width="1" fill="none" /><path d="M286 429.6L224.9 450.2" stroke="#ff0000" stroke-width="1" fill="none" /><path d="M286 436.5L219 459" stroke="#ff0000" stroke-width="1" fill="none" /><path d="M286 442.4L219 465" stroke="#ff0000" stroke-width="1" fill="none" /><path d="M286 446.3L247.5 470" stroke="#ff0000" stroke-width="1" fill="none" /><path d="M286 451.2L247.5 473.9" stroke="#ff0000" stroke-width="1" fill="none" /><path d="M286 456.2L247.5 478.8" stroke="#ff0000" stroke-width="1" fill="none" /><path d="M286 461L247.5 482.8" stroke="#ff0000" stroke-width="1" fill="none" /><path d="M286 466L215 498.5" stroke="#ff0000" stroke-width="1" fill="none" /><path d="M286 471L226.8 510.3" stroke="#ff0000" stroke-width="1" fill="none" /><path d="M299.5 500V577.5M294.5 538.5H337" stroke="#ff00ff" stroke-width="1" fill="none" /><path d="M299.5 504L307 507L322.5 515.5L331 530L331 547L322 562L307 570L299.5 573" stroke="#ff00ff" stroke-width="1" fill="none" /><circle cx="307" cy="507" r="2.8" stroke="#00ffff" fill="none" stroke-width="1"/><path d="M303 507H311M307 503V511" stroke="#ff00ff" stroke-width="0.8" fill="none" /><circle cx="322.5" cy="515.5" r="2.8" stroke="#00ffff" fill="none" stroke-width="1"/><path d="M318.5 515.5H326.5M322.5 511.5V519.5" stroke="#ff00ff" stroke-width="0.8" fill="none" /><circle cx="331" cy="530" r="2.8" stroke="#00ffff" fill="none" stroke-width="1"/><path d="M327 530H335M331 526V534" stroke="#ff00ff" stroke-width="0.8" fill="none" /><circle cx="331" cy="547" r="2.8" stroke="#00ffff" fill="none" stroke-width="1"/><path d="M327 547H335M331 543V551" stroke="#ff00ff" stroke-width="0.8" fill="none" /><circle cx="322" cy="562" r="2.8" stroke="#00ffff" fill="none" stroke-width="1"/><path d="M318 562H326M322 558V566" stroke="#ff00ff" stroke-width="0.8" fill="none" /><circle cx="307" cy="570" r="2.8" stroke="#00ffff" fill="none" stroke-width="1"/><path d="M303 570H311M307 566V574" stroke="#ff00ff" stroke-width="0.8" fill="none" /><path d="M296 538L318 524" stroke="#ff0000" stroke-width="1.5" fill="none" /><path d="M320 562V577" stroke="#ff0000" stroke-width="1" fill="none" /><rect x="320" y="575.5" width="19" height="2" fill="#ff0000"/><path d="M379.5 389.5H433.5V433.5H379.5Z M380.5 390.5H432.5V432.5H380.5Z M411.5 390V433" stroke="#ff0000" stroke-width="1" fill="none" /><path d="M380 394.5H433" stroke="#ff0000" stroke-width="1" fill="none" /><path d="M380 399.5H433" stroke="#ff0000" stroke-width="1" fill="none" /><path d="M380 409.5H433" stroke="#ff0000" stroke-width="1" fill="none" /><path d="M380 419.5H433" stroke="#ff0000" stroke-width="1" fill="none" /><path d="M380 424.5H433" stroke="#ff0000" stroke-width="1" fill="none" /><path d="M380 429.5H433" stroke="#ff0000" stroke-width="1" fill="none" /><rect x="386" y="386" width="3" height="3" fill="#ff0000"/><rect x="394" y="386" width="3" height="3" fill="#ff0000"/><rect x="400" y="386" width="2" height="3" fill="#ff0000"/><rect x="405" y="386" width="3" height="3" fill="#ff0000"/><rect x="382" y="391.5" width="12" height="1.6" fill="#ff0000"/><rect x="413" y="391.5" width="14" height="1.6" fill="#ff0000"/><rect x="386.8" y="391.5" width="1" height="1.6" fill="#212830"/><rect x="421.4" y="391.5" width="1" height="1.6" fill="#212830"/><rect x="382" y="396.5" width="12" height="1.6" fill="#ff0000"/><rect x="415" y="396.5" width="8" height="1.6" fill="#ff0000"/><rect x="386.8" y="396.5" width="1" height="1.6" fill="#212830"/><rect x="419.8" y="396.5" width="1" height="1.6" fill="#212830"/><rect x="382" y="401" width="15" height="1.6" fill="#ff0000"/><rect x="414" y="401" width="17" height="1.6" fill="#ff0000"/><rect x="388.0" y="401" width="1" height="1.6" fill="#212830"/><rect x="424.2" y="401" width="1" height="1.6" fill="#212830"/><rect x="382" y="406" width="26" height="1.6" fill="#ff0000"/><rect x="414" y="406" width="17" height="1.6" fill="#ff0000"/><rect x="392.4" y="406" width="1" height="1.6" fill="#212830"/><rect x="424.2" y="406" width="1" height="1.6" fill="#212830"/><rect x="382" y="411" width="17" height="1.6" fill="#ff0000"/><rect x="414" y="411" width="17" height="1.6" fill="#ff0000"/><rect x="388.8" y="411" width="1" height="1.6" fill="#212830"/><rect x="424.2" y="411" width="1" height="1.6" fill="#212830"/><rect x="388" y="416" width="18" height="1.6" fill="#ff0000"/><rect x="414" y="416" width="17" height="1.6" fill="#ff0000"/><rect x="395.2" y="416" width="1" height="1.6" fill="#212830"/><rect x="424.2" y="416" width="1" height="1.6" fill="#212830"/><rect x="382" y="421" width="26" height="1.6" fill="#ff0000"/><rect x="414" y="421" width="17" height="1.6" fill="#ff0000"/><rect x="392.4" y="421" width="1" height="1.6" fill="#212830"/><rect x="424.2" y="421" width="1" height="1.6" fill="#212830"/><rect x="382" y="426" width="20" height="1.6" fill="#ff0000"/><rect x="414" y="426" width="15" height="1.6" fill="#ff0000"/><rect x="390.0" y="426" width="1" height="1.6" fill="#212830"/><rect x="423.0" y="426" width="1" height="1.6" fill="#212830"/><rect x="382" y="430.5" width="10" height="1.6" fill="#ff0000"/><rect x="414" y="430.5" width="16" height="1.6" fill="#ff0000"/><rect x="386.0" y="430.5" width="1" height="1.6" fill="#212830"/><rect x="423.6" y="430.5" width="1" height="1.6" fill="#212830"/><rect x="417" y="527" width="12" height="2" fill="#ff0000"/><rect x="406" y="529" width="37" height="6" fill="#ff0000"/><rect x="406" y="535" width="46" height="4" fill="#ff0000"/><rect x="406" y="539" width="38" height="6" fill="#ff0000"/><rect x="406" y="545" width="45" height="5" fill="#ff0000"/><rect x="406" y="550" width="20" height="3" fill="#ff0000"/><rect x="406" y="553" width="37" height="4" fill="#ff0000"/><rect x="406" y="557" width="41" height="3" fill="#ff0000"/><rect x="406" y="560" width="35" height="2" fill="#ff0000"/><rect x="406" y="562" width="30" height="2" fill="#ff0000"/><rect x="413" y="541" width="1.5" height="1.5" fill="#212830"/><rect x="420" y="533" width="1.5" height="1.5" fill="#212830"/><rect x="427" y="547" width="1.5" height="1.5" fill="#212830"/><rect x="415" y="552" width="1.5" height="1.5" fill="#212830"/><rect x="433" y="545" width="1.5" height="1.5" fill="#212830"/><rect x="422" y="556" width="1.5" height="1.5" fill="#212830"/><rect x="438" y="538" width="1.5" height="1.5" fill="#212830"/><rect x="430" y="531" width="1.5" height="1.5" fill="#212830"/><rect x="418" y="559" width="1.5" height="1.5" fill="#212830"/><rect x="436" y="552" width="1.5" height="1.5" fill="#212830"/><rect x="411" y="532" width="20" height="1" fill="#212830"/><rect x="411" y="538.5" width="12" height="1" fill="#212830"/><rect x="425" y="542.5" width="15" height="1" fill="#212830"/><rect x="411" y="548.5" width="25" height="1" fill="#212830"/><rect x="430" y="552" width="10" height="1" fill="#212830"/><rect x="411" y="555.5" width="18" height="1" fill="#212830"/><rect x="408" y="531" width="2" height="2" fill="#212830"/><rect x="408" y="535" width="2" height="2" fill="#212830"/><rect x="408" y="539" width="2" height="2" fill="#212830"/><rect x="408" y="543" width="2" height="2" fill="#212830"/><rect x="408" y="547" width="2" height="2" fill="#212830"/><rect x="408" y="551" width="2" height="2" fill="#212830"/><rect x="408" y="555" width="2" height="2" fill="#212830"/><rect x="408" y="559" width="2" height="2" fill="#212830"/></g></svg>
<div class="a" style="left:7.5px;top:337px;width:120px;overflow:hidden;height:24px"><div class="mn" style="left:-4.5px;top:5px;font-size:13px;line-height:14px">俯视<span style="letter-spacing:1.4px">][</span>二维线框<span style="letter-spacing:1.4px">]</span></div></div>

<div class="a" style="left:623px;top:289px;width:25px;height:302px;background:#efefef;border:1px solid #3a3a3a;border-bottom:none"></div>
<svg class="a" style="left:624px;top:290px" width="23" height="7"><rect width="23" height="7" fill="#5a5a5a"/><rect x="2" y="2" width="1" height="1" fill="#1a1a1a"/><rect x="2" y="4" width="1" height="1" fill="#1a1a1a"/><rect x="4" y="2" width="1" height="1" fill="#1a1a1a"/><rect x="4" y="4" width="1" height="1" fill="#1a1a1a"/><rect x="6" y="2" width="1" height="1" fill="#1a1a1a"/><rect x="6" y="4" width="1" height="1" fill="#1a1a1a"/><rect x="8" y="2" width="1" height="1" fill="#1a1a1a"/><rect x="8" y="4" width="1" height="1" fill="#1a1a1a"/><rect x="10" y="2" width="1" height="1" fill="#1a1a1a"/><rect x="10" y="4" width="1" height="1" fill="#1a1a1a"/><rect x="12" y="2" width="1" height="1" fill="#1a1a1a"/><rect x="12" y="4" width="1" height="1" fill="#1a1a1a"/><rect x="14" y="2" width="1" height="1" fill="#1a1a1a"/><rect x="14" y="4" width="1" height="1" fill="#1a1a1a"/><rect x="16" y="2" width="1" height="1" fill="#1a1a1a"/><rect x="16" y="4" width="1" height="1" fill="#1a1a1a"/><rect x="18" y="2" width="1" height="1" fill="#1a1a1a"/><rect x="18" y="4" width="1" height="1" fill="#1a1a1a"/><rect x="20" y="2" width="1" height="1" fill="#1a1a1a"/><rect x="20" y="4" width="1" height="1" fill="#1a1a1a"/></svg>
<div class="a" style="left:651px;top:289px;width:25px;height:302px;background:#efefef;border:1px solid #3a3a3a;border-bottom:none"></div>
<svg class="a" style="left:652px;top:290px" width="23" height="7"><rect width="23" height="7" fill="#5a5a5a"/><rect x="2" y="2" width="1" height="1" fill="#1a1a1a"/><rect x="2" y="4" width="1" height="1" fill="#1a1a1a"/><rect x="4" y="2" width="1" height="1" fill="#1a1a1a"/><rect x="4" y="4" width="1" height="1" fill="#1a1a1a"/><rect x="6" y="2" width="1" height="1" fill="#1a1a1a"/><rect x="6" y="4" width="1" height="1" fill="#1a1a1a"/><rect x="8" y="2" width="1" height="1" fill="#1a1a1a"/><rect x="8" y="4" width="1" height="1" fill="#1a1a1a"/><rect x="10" y="2" width="1" height="1" fill="#1a1a1a"/><rect x="10" y="4" width="1" height="1" fill="#1a1a1a"/><rect x="12" y="2" width="1" height="1" fill="#1a1a1a"/><rect x="12" y="4" width="1" height="1" fill="#1a1a1a"/><rect x="14" y="2" width="1" height="1" fill="#1a1a1a"/><rect x="14" y="4" width="1" height="1" fill="#1a1a1a"/><rect x="16" y="2" width="1" height="1" fill="#1a1a1a"/><rect x="16" y="4" width="1" height="1" fill="#1a1a1a"/><rect x="18" y="2" width="1" height="1" fill="#1a1a1a"/><rect x="18" y="4" width="1" height="1" fill="#1a1a1a"/><rect x="20" y="2" width="1" height="1" fill="#1a1a1a"/><rect x="20" y="4" width="1" height="1" fill="#1a1a1a"/></svg>
<div class="a" style="left:625px;top:366px;width:21px;height:1px;background:#cbbf9a"></div>
<div class="a" style="left:625px;top:548px;width:21px;height:1px;background:#cbbf9a"></div>
<svg class="a" style="left:627.5px;top:300.4px" width="16" height="16"><circle cx="5.8" cy="8" r="5" fill="#b9dcf4" stroke="#2a78d0" stroke-width="1.4"/><circle cx="10.2" cy="8" r="5" fill="#b9dcf4" stroke="#2a78d0" stroke-width="1.4"/></svg>
<svg class="a" style="left:627.5px;top:322.2px" width="16" height="16"><circle cx="10.2" cy="8" r="5" fill="#f4f4f4" stroke="#555" stroke-width="1.3"/><circle cx="5.8" cy="8" r="5" fill="#b9dcf4" stroke="#2a78d0" stroke-width="1.4"/><path d="M10.2 3A5 5 0 0 1 10.2 13" fill="none" stroke="#555" stroke-width="1.3"/></svg>
<svg class="a" style="left:627.5px;top:343.8px" width="16" height="16"><circle cx="5.8" cy="8" r="5" fill="#f4f4f4" stroke="#555" stroke-width="1.3"/><circle cx="10.2" cy="8" r="5" fill="none" stroke="#555" stroke-width="1.3"/><path d="M8 3.6A5 5 0 0 1 8 12.4A5 5 0 0 1 8 3.6Z" fill="#b9dcf4" stroke="#2a78d0"/></svg>
<svg class="a" style="left:627.5px;top:372.7px" width="16" height="16"><path d="M1.5 5L5 1.5H14.5V11L11 14.5H1.5Z" fill="#e8e8e8" stroke="#2b3340" stroke-width="1.1"/><path d="M1.5 5H11V9H1.5Z" fill="#b9dcf4"/><path d="M1.5 5H11V14.5M11 5L14.5 1.5M1.5 9H11" fill="none" stroke="#2b3340"/><path d="M6 8.5V6M4.5 7L6 5.5L7.5 7" stroke="#111" fill="none"/></svg>
<svg class="a" style="left:627.5px;top:395.0px" width="16" height="16"><path d="M4 1V8M0.5 4.5H7.5M4 1L3 2.2M4 1L5 2.2M0.5 4.5L1.7 3.5M7.5 4.5L6.3 3.5M4 8L3 6.8M4 8L5 6.8" stroke="#111" stroke-width="1.1" fill="none"/><path d="M6 9L9 6.5H15V13L12 15.5H6Z" fill="#b9dcf4" stroke="#2a78d0" stroke-width="1.1"/><path d="M6 9H12V15.5M12 9L15 6.5" fill="none" stroke="#2a78d0" stroke-width="1"/></svg>
<svg class="a" style="left:627.5px;top:417.5px" width="16" height="16"><rect x="4.5" y="1.5" width="10" height="10" fill="#b9dcf4" stroke="#2a78d0" stroke-width="1.2"/><rect x="1.5" y="4.5" width="10" height="10" fill="#f4f4f4" stroke="#2a78d0" stroke-width="1.3"/><rect x="3" y="6" width="7" height="7" fill="none" stroke="#333"/></svg>
<svg class="a" style="left:627.5px;top:440.0px" width="16" height="16"><path d="M1 1L6 6M6 1L1 6" stroke="#d82020" stroke-width="1.8"/><path d="M6 9L9 6.5H15V13L12 15.5H6Z" fill="#b9dcf4" stroke="#2a78d0" stroke-width="1.1"/><path d="M6 9H12V15.5M12 9L15 6.5" fill="none" stroke="#2a78d0" stroke-width="1"/></svg>
<svg class="a" style="left:627.5px;top:459.8px" width="16" height="16"><path d="M5.5 4A2.5 2.5 0 1 1 3 1.5" fill="none" stroke="#111" stroke-width="1.1"/><path d="M2 0.5L4 1.5L2.5 3" fill="#111"/><path d="M6 9L9 6.5H15V13L12 15.5H6Z" fill="#b9dcf4" stroke="#2a78d0" stroke-width="1.1"/><path d="M6 9H12V15.5M12 9L15 6.5" fill="none" stroke="#2a78d0" stroke-width="1"/></svg>
<svg class="a" style="left:627.5px;top:483.4px" width="16" height="16"><path d="M2 7L6 3H11L14 11L10 15H2Z" fill="#dadfe6" stroke="#2b3340" stroke-width="1.1"/><path d="M8 4L11 12" stroke="#2a78d0" stroke-width="2"/><path d="M12 1V6M10.5 2.5L12 1L13.5 2.5" stroke="#111" fill="none"/></svg>
<svg class="a" style="left:627.5px;top:505.6px" width="16" height="16"><path d="M4 8L7 5.5H14V12L11 14.5H4Z" fill="#b9dcf4" stroke="#2a78d0" stroke-width="1.1"/><path d="M1.5 5L4 2.5H10V9L7.5 11.5H1.5Z" fill="#b9dcf4" stroke="#2a78d0" stroke-width="1.1"/><path d="M3 1.5A2 2 0 0 0 1 3.5" stroke="#111" fill="none"/></svg>
<svg class="a" style="left:627.5px;top:527.8px" width="16" height="16"><rect x="1" y="1" width="3" height="3" fill="#d83030"/><rect x="5" y="1" width="3" height="3" fill="#2a6ec8"/><rect x="1" y="5" width="3" height="3" fill="#e8801a"/><path d="M6 9L9 6.5H15V13L12 15.5H6Z" fill="#b9dcf4" stroke="#2a78d0" stroke-width="1.1"/><path d="M6 9H12V15.5M12 9L15 6.5" fill="none" stroke="#2a78d0" stroke-width="1"/></svg>
<svg class="a" style="left:627.5px;top:552.8px" width="16" height="16"><path d="M2 5Q2 1.5 6 1.5H10Q14 1.5 14 5V14.5H2Z" fill="#dde2e8" stroke="#2b3340" stroke-width="1.1"/><path d="M2 5Q6 3 10 5V14.5" fill="#b9dcf4" stroke="#2a78d0" stroke-width="1.1"/></svg>
<svg class="a" style="left:627.5px;top:576.4px" width="16" height="16"><path d="M2 8L7 2.5H10L14 6V14.5H2Z" fill="#dde2e8" stroke="#2b3340" stroke-width="1.1"/><path d="M2 8L7 2.5L11 6.5L6 12Z" fill="#b9dcf4" stroke="#2a78d0" stroke-width="1.1"/></svg>
<svg class="a" style="left:655.5px;top:300.4px" width="16" height="16"><path d="M4 11L13 1.5L15 3.5L6 13Z" fill="#e0c08a" stroke="#6a4a20" stroke-width=".8"/><path d="M4 11L6 13L4.5 14.5Q2.5 15 2.2 13Q2 12 3 11.5Z" fill="#e05010"/><path d="M0.5 15.5H6M9 15.5H15.5" stroke="#222" stroke-width="1"/></svg>
<svg class="a" style="left:655.5px;top:322.0px" width="16" height="16"><circle cx="4" cy="4" r="3" fill="#f4f4f4" stroke="#333" stroke-width="1.1"/><path d="M9 3H12.5V7M11 5.5L12.5 7.2L14 5.5" stroke="#111" fill="none" stroke-width="1.1"/><circle cx="9" cy="10.5" r="3.2" fill="#b9dcf4" stroke="#2a78d0" stroke-width="1.2"/><circle cx="12" cy="12.5" r="3.2" fill="#b9dcf4" stroke="#2a78d0" stroke-width="1.2"/></svg>
<svg class="a" style="left:655.5px;top:344.0px" width="16" height="16"><path d="M8 0.5V15.5" stroke="#333"/><path d="M6.5 3L2 13.5H6.5Z" fill="none" stroke="#333" stroke-width="1.1"/><path d="M9.5 3L14 13.5H9.5Z" fill="#b9dcf4" stroke="#2a78d0" stroke-width="1.1"/></svg>
<svg class="a" style="left:655.5px;top:367.5px" width="16" height="16"><path d="M1.5 13.5V9Q1.5 6 4 6H5V4Q5 1.5 8 1.5Q11 1.5 11 4V8H14.5V13.5Z" fill="none" stroke="#222" stroke-width="1.3"/><path d="M4 11.5V9.5Q4 8.5 5 8.5H7.5V4.5Q7.5 3.8 8 3.8Q8.8 3.8 8.8 4.5V10.5H13V11.5Z" fill="none" stroke="#2a78d0" stroke-width="1.3"/></svg>
<svg class="a" style="left:655.5px;top:388.5px" width="16" height="16"><rect x="1.5" y="1.5" width="5" height="5" fill="#fafafa" stroke="#333"/><rect x="9.5" y="1.5" width="5" height="5" fill="#b9dcf4" stroke="#2a78d0"/><rect x="1.5" y="9.5" width="5" height="5" fill="#b9dcf4" stroke="#2a78d0"/><rect x="9.5" y="9.5" width="5" height="5" fill="#b9dcf4" stroke="#2a78d0"/><path d="M15.5 11V15.5H11Z" fill="#111"/></svg>
<svg class="a" style="left:655.5px;top:410.9px" width="16" height="16"><path d="M8 0.5V15.5M0.5 8H15.5" stroke="#111" stroke-width="1.2"/><path d="M8 0L5.5 3H10.5ZM8 16L5.5 13H10.5ZM0 8L3 5.5V10.5ZM16 8L13 5.5V10.5Z" fill="#111"/><rect x="6" y="6" width="4" height="4" fill="#fff" stroke="#111"/></svg>
<svg class="a" style="left:655.5px;top:432.0px" width="16" height="16"><path d="M12.5 4.5A6 6 0 1 1 7 2" fill="none" stroke="#555" stroke-width="1.5"/><path d="M6 0L10 2.2L6 4.5Z" fill="#222"/></svg>
<svg class="a" style="left:655.5px;top:454.0px" width="16" height="16"><rect x="4.5" y="1.5" width="10.5" height="11" fill="#b9dcf4" stroke="#2a78d0" stroke-width="1.2"/><rect x="1.5" y="7" width="6.5" height="7.5" fill="#f0f0f0" stroke="#333" stroke-width="1.2"/></svg>
<svg class="a" style="left:655.5px;top:477.8px" width="16" height="16"><path d="M2 1.5H10L14.5 14.5H2Z" fill="#f4f4f4" stroke="#333" stroke-width="1.1"/><path d="M10 1.5L14.5 14.5" stroke="#2a78d0" stroke-width="1.3"/><path d="M4 9H11M9 7L11 9L9 11" stroke="#111" stroke-width="1.1" fill="none"/></svg>
<svg class="a" style="left:655.5px;top:500.0px" width="16" height="16"><path d="M4 15L12 1" stroke="#2a78d0" stroke-width="1.5"/><path d="M0.5 8H3.5M6 8H7M10 8H11M13 8H14" stroke="#111" stroke-width="1.1"/></svg>
<svg class="a" style="left:655.5px;top:520.9px" width="16" height="16"><path d="M4 15L12 1" stroke="#2a78d0" stroke-width="1.5"/><path d="M0.5 8H2.5M4.5 8H5.5M7 8H8" stroke="#111" stroke-width="1.1"/></svg>
<svg class="a" style="left:655.5px;top:543.0px" width="16" height="16"><path d="M1.5 14.5V4H14.5" fill="none" stroke="#333" stroke-width="1.2"/><rect x="10" y="2" width="4" height="4" fill="#2a78d0"/></svg>
<svg class="a" style="left:655.5px;top:564.0px" width="16" height="16"><path d="M1.5 4V14.5H14.5V4" fill="#f2f4f6" stroke="#333" stroke-width="1.2"/><rect x="3" y="2" width="3.5" height="3.5" fill="#2a78d0"/><rect x="9.5" y="2" width="3.5" height="3.5" fill="#2a78d0"/></svg>

<div class="a" style="left:0;top:596px;width:678px;height:13px;background:#cbcbcb"></div>
<div class="a" style="left:682px;top:108px;width:1px;height:501px;background:#262626"></div>
<div class="a" style="left:3px;top:606px;width:480px;height:3px;background:#fff;border-top:1.5px solid #3a3a3a;border-left:1px solid #3a3a3a"></div>
<div class="a" style="left:4px;top:607px;width:8px;height:2px;background:#555"></div>
<div class="a" style="left:474px;top:607px;width:9px;height:2px;background:#777"></div>
<div class="a" style="left:687px;top:108px;width:1px;height:501px;background:#f5f5f5"></div>

</body></html>
